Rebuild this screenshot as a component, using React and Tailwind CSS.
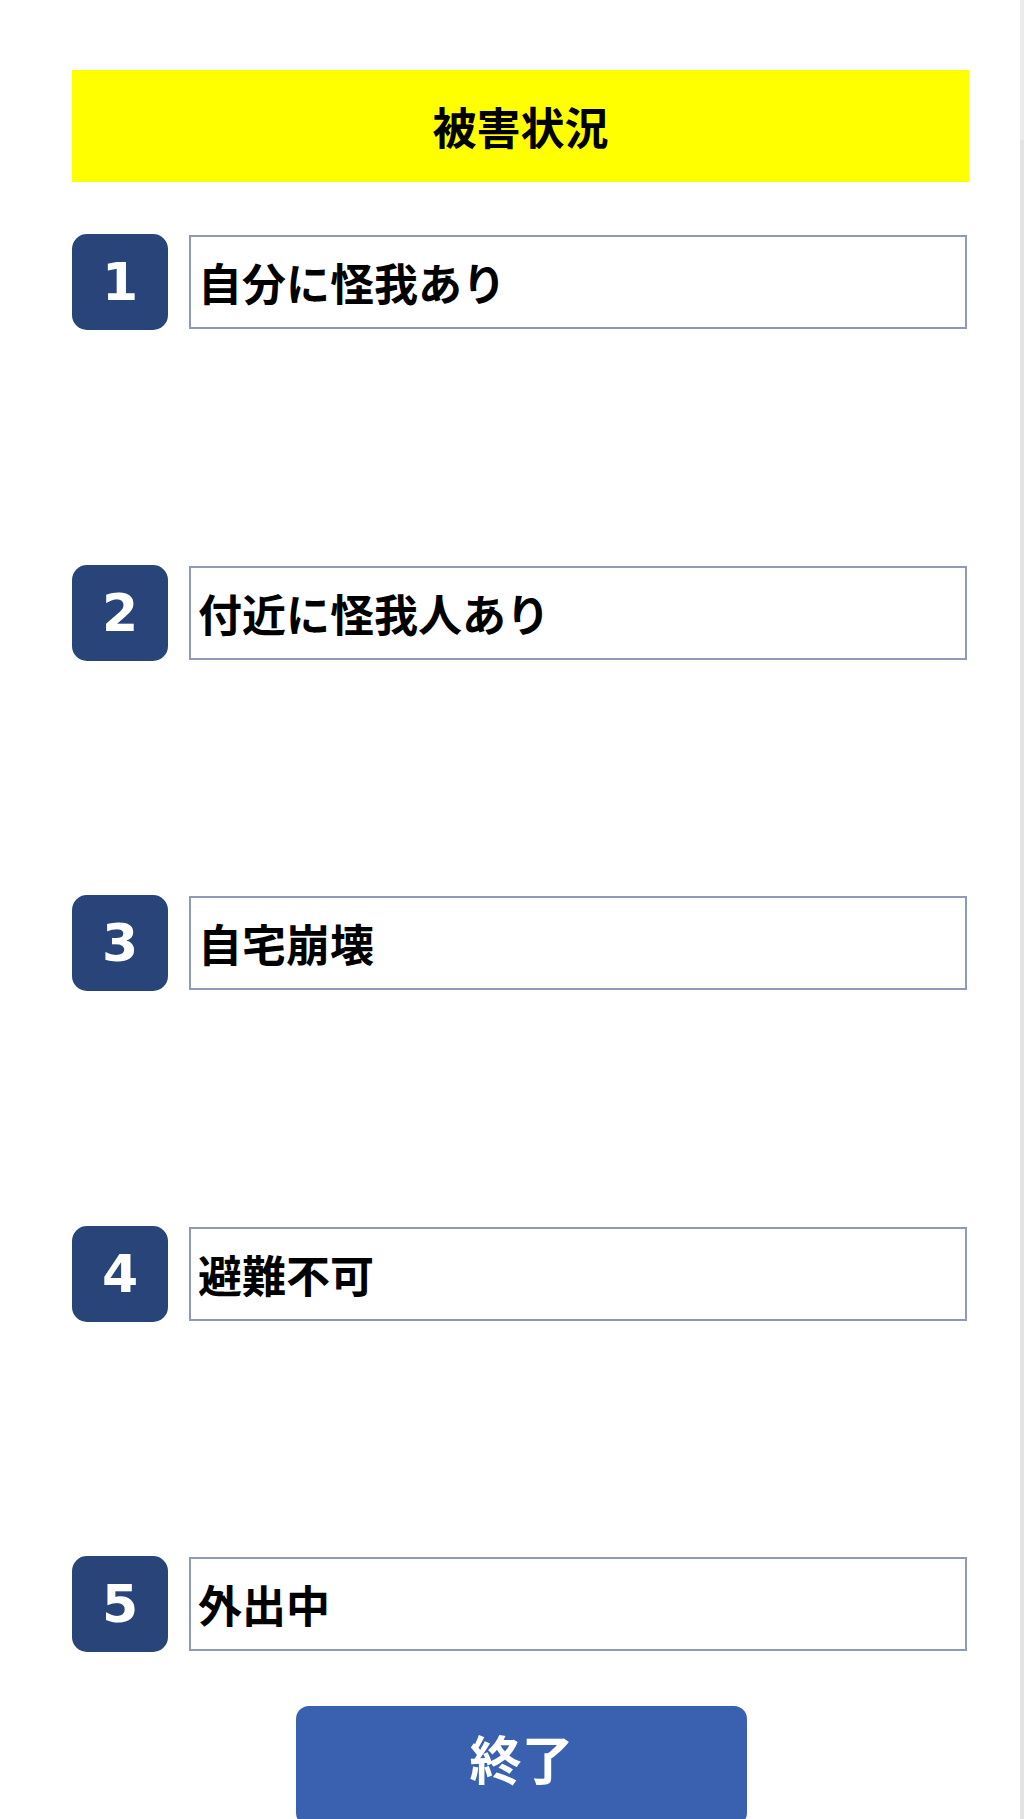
import React from "react";

const items = ["自分に怪我あり", "付近に怪我人あり", "自宅崩壊", "避難不可", "外出中"];

export default function App() {
  return (
    <div className="flex h-[1819px] w-[1024px] overflow-hidden bg-white">
      <div
        className="flex w-[1020px] shrink-0 flex-col pl-[72px] pt-[70px]"
        style={{ fontFamily: '"Noto Sans CJK JP", "Noto Sans", sans-serif' }}
      >
        <div className="flex h-[112px] w-[897px] shrink-0 items-center justify-center bg-[#ffff00]">
          <span className="text-[44px] font-bold leading-none text-black">被害状況</span>
        </div>
        <div className="mt-[52px] flex shrink-0 flex-col gap-[234.5px]">
          {items.map((t, i) => (
            <div key={i} className="flex h-[96px] shrink-0 items-center">
              <div
                className="flex h-[96px] w-[96px] shrink-0 items-center justify-center rounded-[15px] bg-[#284479] text-[52px] font-bold leading-none text-white"
                style={{ fontFamily: '"DejaVu Sans", sans-serif' }}
              >
                {i + 1}
              </div>
              <div className="ml-[21px] flex h-[94px] w-[778px] shrink-0 items-center border-2 border-[#8f99b8] pl-[7px]">
                <span className="text-[44px] font-bold leading-none text-black">{t}</span>
              </div>
            </div>
          ))}
        </div>
        <div className="mt-[54px] flex w-[897px] shrink-0 justify-start">
          <div className="ml-[224px] flex h-[120px] w-[451px] shrink-0 justify-center rounded-[13px] bg-[#3961b0] pt-[26px]">
            <span className="text-[52px] font-bold leading-none text-white">終了</span>
          </div>
        </div>
      </div>
      <div className="flex w-[4px] shrink-0 flex-col">
        <div className="h-[140px] bg-[#ececec]"></div>
        <div className="flex-1 bg-[#e2e2e2]"></div>
      </div>
    </div>
  );
}
